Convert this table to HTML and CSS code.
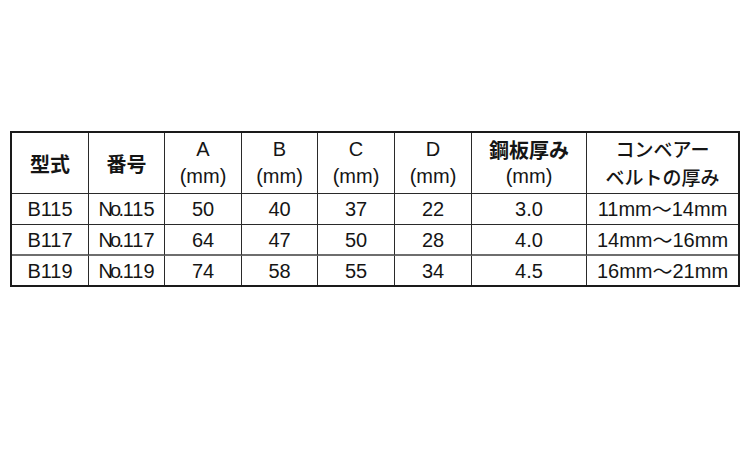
FILE: index.html
```html
<!DOCTYPE html>
<html lang="ja">
<head>
<meta charset="utf-8">
<title>B115 spec table</title>
<link rel="stylesheet" href="styles.css">
</head>
<body>
<div class="spec">
  <div class="cell head jp b">型式</div>
  <div class="cell head jp b">番号</div>
  <div class="cell head"><span>A</span><span>(mm)</span></div>
  <div class="cell head"><span>B</span><span>(mm)</span></div>
  <div class="cell head"><span>C</span><span>(mm)</span></div>
  <div class="cell head"><span>D</span><span>(mm)</span></div>
  <div class="cell head"><span class="jp b">鋼板厚み</span><span>(mm)</span></div>
  <div class="cell head last kana"><span class="jp m">コンベアー</span><span class="jp m">ベルトの厚み</span></div>

  <div class="cell r1">B115</div>
  <div class="cell r1"><span class="no"><span class="n">N</span><span class="o">o.</span></span>115</div>
  <div class="cell r1">50</div>
  <div class="cell r1">40</div>
  <div class="cell r1">37</div>
  <div class="cell r1">22</div>
  <div class="cell r1">3.0</div>
  <div class="cell r1 last">11mm<span class="jp">～</span>14mm</div>

  <div class="cell r2">B117</div>
  <div class="cell r2"><span class="no"><span class="n">N</span><span class="o">o.</span></span>117</div>
  <div class="cell r2">64</div>
  <div class="cell r2">47</div>
  <div class="cell r2">50</div>
  <div class="cell r2">28</div>
  <div class="cell r2">4.0</div>
  <div class="cell r2 last">14mm<span class="jp">～</span>16mm</div>

  <div class="cell r3">B119</div>
  <div class="cell r3"><span class="no"><span class="n">N</span><span class="o">o.</span></span>119</div>
  <div class="cell r3">74</div>
  <div class="cell r3">58</div>
  <div class="cell r3">55</div>
  <div class="cell r3">34</div>
  <div class="cell r3">4.5</div>
  <div class="cell r3 last">16mm<span class="jp">～</span>21mm</div>
</div>
</body>
</html>
```

FILE: styles.css
```css
html, body {
  margin: 0;
  padding: 0;
  background: #ffffff;
}
body {
  padding: 131px 0 0 10px;
  font-family: "Liberation Sans", Arial, "Noto Sans CJK JP", sans-serif;
  font-size: 20px;
  color: #151515;
}
.spec {
  width: 726px;
  border: 2px solid #1a1a1a;
  display: grid;
  grid-template-columns: 77px 76px 77px 76px 77px 77px 115px 151px;
  grid-template-rows: 61px 31px 31px 29px;
}
.cell {
  box-sizing: border-box;
  border-right: 1px solid #2a2a2a;
  display: flex;
  align-items: center;
  justify-content: center;
  white-space: nowrap;
  line-height: 26px;
}
.cell.last {
  border-right: none;
}
.head {
  flex-direction: column;
  border-bottom: 1px solid #2a2a2a;
  line-height: 27px;
}
.head.kana {
  line-height: 28px;
}
.head.kana .jp {
  font-size: 19px;
}
.r1 {
  border-bottom: 1px solid #2a2a2a;
}
.r2 {
  border-bottom: 2px solid #6e6e6e;
}
.jp {
  font-family: "Noto Sans CJK JP", sans-serif;
  font-size: 20px;
  font-weight: 400;
}
.jp.m {
  font-weight: 500;
}
.jp.b {
  font-weight: 700;
}
.no {
  margin-right: 1px;
}
.no .n {
  letter-spacing: -3px;
}
.no .o {
  letter-spacing: -2.5px;
}
```
